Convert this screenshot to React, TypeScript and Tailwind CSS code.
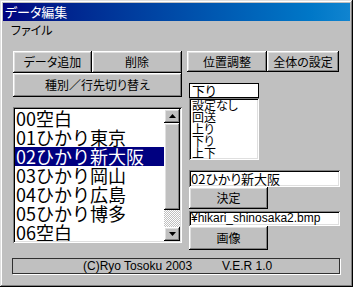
import React from 'react';

const raised =
  'shadow-[inset_-1px_-1px_#000,inset_1px_1px_#fff,inset_-2px_-2px_#808080,inset_2px_2px_#dfdfdf] bg-[#c0c0c0]';
const sunken =
  'shadow-[inset_1px_1px_#808080,inset_-1px_-1px_#fff,inset_2px_2px_#000,inset_-2px_-2px_#dfdfdf] bg-white';
const jp = "font-['Noto_Sans_CJK_JP',sans-serif]";

const stations = ['00空白', '01ひかり東京', '02ひかり新大阪', '03ひかり岡山', '04ひかり広島', '05ひかり博多', '06空白'];
const kinds = ['設定なし', '回送', '上り', '下り', '上下'];

const Btn = ({ label, className }: { label: string; className: string }) => (
  <div className={`${raised} ${className} flex items-center justify-center text-[12px] text-black`}>{label}</div>
);

const Arrow = ({ up }: { up?: boolean }) => (
  <div className={`${raised} h-[14px] flex items-center justify-center`}>
    <svg width="7" height="4" viewBox="0 0 7 4">
      {up ? <polygon points="3.5,0 7,4 0,4" fill="#000" /> : <polygon points="0,0 7,0 3.5,4" fill="#000" />}
    </svg>
  </div>
);

export default function App() {
  return (
    <div
      className={`${jp} [font-feature-settings:'palt'] w-[353px] h-[287px] bg-[#c0c0c0] p-[3px] flex flex-col shadow-[inset_-1px_-1px_#000,inset_1px_1px_#dfdfdf,inset_-2px_-2px_#808080,inset_2px_2px_#fff]`}
    >
      <div className="h-[18px] bg-linear-to-r from-[#000080] to-[#1084d0] flex items-center pl-[2px] text-white text-[13px]">
        データ編集
      </div>
      <div className="h-[17px] pl-[8px] text-[12px] leading-[17px] text-black">ファイル</div>

      <div className="flex pl-[10px] pt-[13px]">
        <div className="w-[169px] flex flex-col">
          <div className="flex">
            <Btn label="データ追加" className="w-[79px] h-[22px]" />
            <Btn label="削除" className="flex-1 h-[22px]" />
          </div>
          <Btn label="種別／行先切り替え" className="h-[24px]" />
          <div className={`${sunken} mt-[10px] h-[136px] p-[2px] flex`}>
            <div className="flex-1 flex flex-col overflow-hidden [font-feature-settings:normal]">
              {stations.map((s, i) => (
                <div
                  key={s}
                  className={`h-[19px] shrink-0 leading-[19px] text-[18px] pl-[1px] whitespace-nowrap ${
                    i === 2 ? 'bg-[#000080] text-white' : 'text-black'
                  }`}
                >
                  {s}
                </div>
              ))}
            </div>
            <div className="w-[16px] flex flex-col">
              <Arrow up />
              <div className={`${raised} h-[87px]`} />
              <div className="flex-1 bg-[repeating-conic-gradient(#c0c0c0_0_25%,#fff_0_50%)] bg-[length:2px_2px]" />
              <Arrow />
            </div>
          </div>
        </div>

        <div className="ml-[5px] flex flex-col">
          <div className="flex">
            <Btn label="位置調整" className="w-[80px] h-[21px]" />
            <Btn label="全体の設定" className="w-[72px] h-[21px]" />
          </div>
          <div className="ml-[2px] mt-[11px] w-[70px] h-[15px] bg-white border border-black pl-[2px] text-[13px] leading-[13px] text-black">
            下り
          </div>
          <div className={`${sunken} ml-[2px] w-[70px] h-[62px] pt-[1px] pl-[3px] flex flex-col`}>
            {kinds.map((k) => (
              <div key={k} className="h-[12px] leading-[12px] text-[12px] text-black">
                {k}
              </div>
            ))}
          </div>
          <div className={`${sunken} ml-[2px] mt-[10px] w-[151px] h-[17px] pl-[2px] text-[13px] leading-[17px] text-black`}>
            02ひかり新大阪
          </div>
          <Btn label="決定" className="ml-[2px] w-[79px] h-[22px]" />
          <div className={`${sunken} ml-[2px] mt-[2px] w-[151px] h-[15px] pl-[2px] text-[12px] leading-[15px] text-black font-['Liberation_Sans',sans-serif]`}>
            ¥hikari_shinosaka2.bmp
          </div>
          <Btn label="画像" className="ml-[2px] w-[79px] h-[24px]" />
        </div>
      </div>

      <div className="mt-[8px] ml-[9px] w-[328px] h-[16px] border border-[#303030] shadow-[1px_1px_#fff] flex items-center pl-[70px] text-[12px] text-black font-['Liberation_Sans',sans-serif]">
        <span className="w-[139px]">(C)Ryo Tosoku 2003</span>
        <span>V.E.R 1.0</span>
      </div>
    </div>
  );
}
